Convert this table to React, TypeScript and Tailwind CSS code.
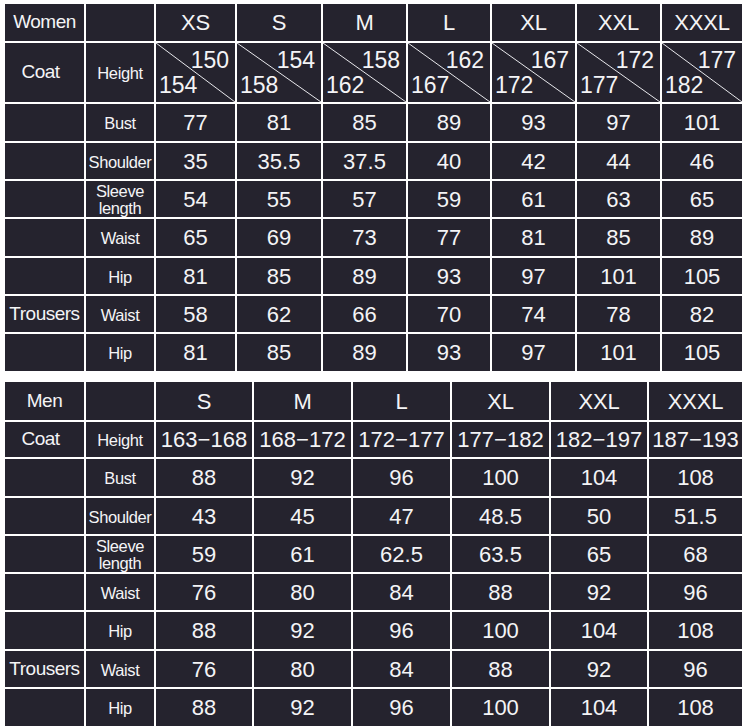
const font = "font-['Liberation_Sans',Arial,sans-serif]";

type Row = { group?: string; label: string; values: (string | [string, string])[] };

const women: Row[] = [
  { group: "Coat", label: "Height", values: [["150", "154"], ["154", "158"], ["158", "162"], ["162", "167"], ["167", "172"], ["172", "177"], ["177", "182"]] },
  { label: "Bust", values: ["77", "81", "85", "89", "93", "97", "101"] },
  { label: "Shoulder", values: ["35", "35.5", "37.5", "40", "42", "44", "46"] },
  { label: "Sleeve length", values: ["54", "55", "57", "59", "61", "63", "65"] },
  { label: "Waist", values: ["65", "69", "73", "77", "81", "85", "89"] },
  { label: "Hip", values: ["81", "85", "89", "93", "97", "101", "105"] },
  { group: "Trousers", label: "Waist", values: ["58", "62", "66", "70", "74", "78", "82"] },
  { label: "Hip", values: ["81", "85", "89", "93", "97", "101", "105"] },
];

const men: Row[] = [
  { group: "Coat", label: "Height", values: ["163−168", "168−172", "172−177", "177−182", "182−197", "187−193"] },
  { label: "Bust", values: ["88", "92", "96", "100", "104", "108"] },
  { label: "Shoulder", values: ["43", "45", "47", "48.5", "50", "51.5"] },
  { label: "Sleeve length", values: ["59", "61", "62.5", "63.5", "65", "68"] },
  { label: "Waist", values: ["76", "80", "84", "88", "92", "96"] },
  { label: "Hip", values: ["88", "92", "96", "100", "104", "108"] },
  { group: "Trousers", label: "Waist", values: ["76", "80", "84", "88", "92", "96"] },
  { label: "Hip", values: ["88", "92", "96", "100", "104", "108"] },
];

const cell = "flex items-center justify-center bg-[#25232e] text-[#f4f4f6]";

const SplitCell = ({ top, bottom }: { top: string; bottom: string }) => (
  <div className="relative flex flex-col justify-between bg-[#25232e] px-[3px] pb-[5px] pt-[6px] text-[23px] leading-none text-[#f4f4f6]">
    <svg className="absolute inset-0 h-full w-full" preserveAspectRatio="none" viewBox="0 0 100 100">
      <line x1="0" y1="0" x2="100" y2="100" stroke="#e8e8ec" strokeWidth="1" vectorEffect="non-scaling-stroke" />
    </svg>
    <span className="relative self-end pr-[3px]">{top}</span>
    <span className="relative self-start">{bottom}</span>
  </div>
);

const SizeTable = ({ title, sizes, rows, cols, rowsClass }: { title: string; sizes: string[]; rows: Row[]; cols: string; rowsClass: string }) => (
  <div className={`grid w-[737px] gap-[2px] bg-white ${cols} ${rowsClass}`}>
    <div className={`${cell} text-[19px] tracking-[-0.5px]`}>{title}</div>
    <div className={cell} />
    {sizes.map((s) => (
      <div key={s} className={`${cell} text-[22px] tracking-[-0.2px]`}>{s}</div>
    ))}
    {rows.map((row, i) => (
      <div key={i} className="contents">
        <div className={`${cell} text-[19px] tracking-[-0.5px] ${row.group === "Coat" ? "pr-[8px]" : ""}`}>{row.group ?? ""}</div>
        <div className={`${cell} pt-[2px] text-center text-[16.5px] leading-[17px] tracking-[-0.4px]`}>
          {row.label === "Sleeve length" ? (
            <span>Sleeve<br />length</span>
          ) : (
            row.label
          )}
        </div>
        {row.values.map((v, j) =>
          Array.isArray(v) ? (
            <SplitCell key={j} top={v[0]} bottom={v[1]} />
          ) : (
            <div key={j} className={`${cell} ${v.includes("−") ? "text-[22px]" : "text-[22px]"}`}>{v}</div>
          )
        )}
      </div>
    ))}
  </div>
);

export default function App() {
  return (
    <div className={`${font} flex min-h-[728px] w-[750px] flex-col gap-[11px] bg-white pl-[5px] pt-[4px]`}>
      <SizeTable
        title="Women"
        sizes={["XS", "S", "M", "L", "XL", "XXL", "XXXL"]}
        rows={women}
        cols="grid-cols-[79px_68px_79px_84px_83px_82px_83px_83px_80px]"
        rowsClass="grid-rows-[37px_59px_37px_36px_36px_37px_36px_36px_37px]"
      />
      <SizeTable
        title="Men"
        sizes={["S", "M", "L", "XL", "XXL", "XXXL"]}
        rows={men}
        cols="grid-cols-[79px_68px_96px_97px_97px_97px_96px_93px]"
        rowsClass="grid-rows-[38px_35px_37px_36px_36px_36px_37px_36px_37px]"
      />
    </div>
  );
}
